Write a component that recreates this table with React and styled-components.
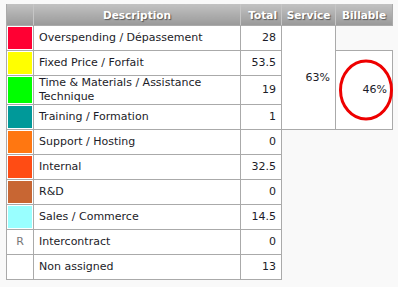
import React from "react";
import styled, { createGlobalStyle } from "styled-components";

const rows = [
	{ color: "#ff0033", label: "Overspending / Dépassement", total: "28" },
	{ color: "#ffff00", label: "Fixed Price / Forfait", total: "53.5" },
	{ color: "#00ff00", label: "Time & Materials / Assistance Technique", total: "19" },
	{ color: "#009999", label: "Training / Formation", total: "1" },
	{ color: "#ff7711", label: "Support / Hosting", total: "0" },
	{ color: "#ff4c14", label: "Internal", total: "32.5" },
	{ color: "#c86633", label: "R&D", total: "0" },
	{ color: "#99ffff", label: "Sales / Commerce", total: "14.5" },
	{ mark: "R", label: "Intercontract", total: "0" },
	{ label: "Non assigned", total: "13" },
];

function App() {
	return (
		<>
			<GlobalStyle />
			<Table>
				<colgroup>
					<col style={{ width: 27 }} />
					<col style={{ width: 207 }} />
					<col style={{ width: 41 }} />
					<col style={{ width: 54 }} />
					<col style={{ width: 57 }} />
				</colgroup>
				<thead>
					<tr>
						<Th />
						<Th $align="center">Description</Th>
						<Th $align="right">Total</Th>
						<Th $align="center">Service</Th>
						<Th $align="center">Billable</Th>
					</tr>
				</thead>
				<tbody>
					{rows.map((row, index) => (
						<tr key={index}>
							<Swatch $color={row.color}>{row.mark}</Swatch>
							<Label>{row.label}</Label>
							<Num>{row.total}</Num>
							{index === 0 && <Ratio rowSpan={4}>63%</Ratio>}
							{index === 0 && <Blank />}
							{index === 1 && (
								<Ratio rowSpan={3}>
									<Circled>
										<svg width="55" height="62" viewBox="0 0 55 62">
											<ellipse cx="27" cy="31" rx="25.5" ry="29" fill="none" stroke="#ee0000" strokeWidth="3" />
										</svg>
									</Circled>
									46%
								</Ratio>
							)}
						</tr>
					))}
				</tbody>
			</Table>
		</>
	);
}

export default App;

const GlobalStyle = createGlobalStyle`
	body {
		margin: 0;
		background: #f9f9f9;
		font-family: "DejaVu Sans", Verdana, sans-serif;
	}
`;

const Table = styled.table`
	border-collapse: collapse;
	table-layout: fixed;
	margin: 4px 0 0 6px;
	width: 386px;
	font-size: 11px;
	line-height: 14px;
	color: #1c1c28;
`;

const Th = styled.th`
	height: 21px;
	padding: 0 4px;
	background: linear-gradient(#c2c2c2, #9a9a9a);
	border-left: 1px solid #c6c6c6;
	border-right: 1px solid #c6c6c6;
	border-bottom: 1px solid #aaa;
	color: #fff;
	font-size: 10.5px;
	font-weight: bold;
	text-align: ${(props) => props.$align || "left"};
	text-shadow: 1px 1px 1px #555;
	white-space: nowrap;
	&:first-child {
		border-left: 1px solid #aaa;
	}
	&:last-child {
		border-right: 1px solid #aaa;
	}
`;

const Cell = styled.td`
	height: 24px;
	padding: 0 5px;
	border: 1px solid #aaa;
	background: #fff;
	vertical-align: middle;
`;

const Swatch = styled(Cell)`
	padding: 0;
	text-align: center;
	color: #777;
	background: ${(props) => props.$color || "#fff"};
	box-shadow: inset 0 0 0 1px #fff;
`;

const Label = styled(Cell)`
	text-align: left;
`;

const Num = styled(Cell)`
	text-align: right;
`;

const Ratio = styled(Cell)`
	position: relative;
	text-align: right;
`;

const Blank = styled.td`
	border: none;
	background: transparent;
`;

const Circled = styled.div`
	position: absolute;
	left: 3px;
	top: 8px;
	line-height: 0;
`;
